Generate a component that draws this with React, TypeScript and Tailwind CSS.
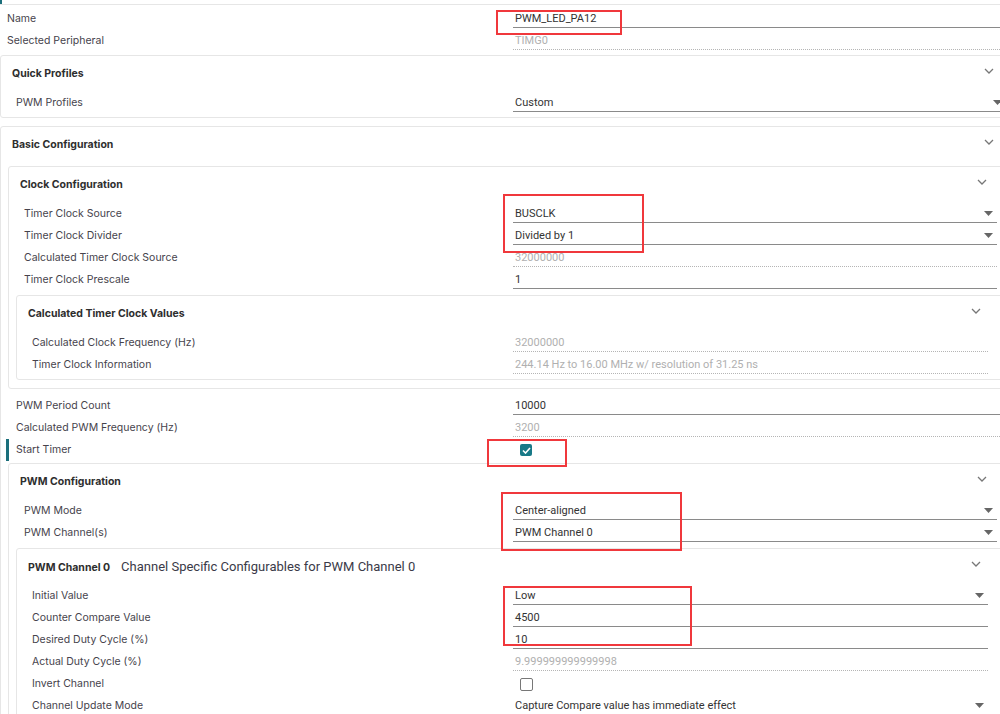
import React from 'react';

const LABEL_W = ['w-[497px]', 'w-[489px]', 'w-[481px]'];
const VALUE_W = ['w-[493px]', 'w-[484px]', 'w-[475px]'];
const HEAD_PR = ['pr-[18px]', 'pr-[17px]', 'pr-[15px]'];

function Chevron() {
  return (
    <svg width="10" height="6" viewBox="0 0 10 6" className="mb-[6px]">
      <polyline points="1,1 5,5 9,1" fill="none" stroke="#777" strokeWidth="1.3" />
    </svg>
  );
}

function Caret() {
  return (
    <svg width="9" height="5" viewBox="0 0 9 5" className="shrink-0">
      <polygon points="0,0 9,0 4.5,5" fill="#666" />
    </svg>
  );
}

type RowProps = {
  level: number;
  label: string;
  value?: string;
  kind?: 'input' | 'select' | 'readonly' | 'checked' | 'unchecked';
  marker?: boolean;
};

function Row({ level, label, value, kind = 'input', marker }: RowProps) {
  return (
    <div className="relative h-[22px] flex items-center pl-[8px]">
      {marker && <div className="absolute left-[-2px] top-0 h-[22px] w-[3px] bg-[#1b6f7b]" />}
      <div className={`${LABEL_W[level]} shrink-0 text-[10.5px] text-[#46434c] font-['Inter',sans-serif]`}>
        {label}
      </div>
      <Value level={level} value={value} kind={kind} />
    </div>
  );
}

function Value({ level, value, kind }: { level: number; value?: string; kind: RowProps['kind'] }) {
  const w = VALUE_W[level];
  if (kind === 'checked') {
    return (
      <div className={`${w} shrink-0 pl-[7px]`}>
        <div className="w-[12px] h-[12px] rounded-[2px] bg-[#187987] flex items-center justify-center">
          <svg width="9" height="7" viewBox="0 0 9 7">
            <polyline points="1,3.5 3.5,6 8,1" fill="none" stroke="#fff" strokeWidth="1.6" />
          </svg>
        </div>
      </div>
    );
  }
  if (kind === 'unchecked') {
    return (
      <div className={`${w} shrink-0 pl-[7px]`}>
        <div className="w-[13px] h-[13px] rounded-[2px] border-[1.5px] border-[#777]" />
      </div>
    );
  }
  return (
    <div
      className={`${w} shrink-0 h-[17px] flex items-center justify-between pl-[2px] pr-[4px] border-b font-['Roboto',sans-serif] text-[11px] leading-[16px] ${
        kind === 'readonly' ? 'border-dotted border-[#b5b5b5] text-[#b0b0b0]' : 'border-[#8a8a8a] text-[#333]'
      }`}
    >
      <span>{value}</span>
      {kind === 'select' && <Caret />}
    </div>
  );
}

function Panel({
  level,
  title,
  subtitle,
  className = '',
  children,
}: {
  level: number;
  title: string;
  subtitle?: string;
  className?: string;
  children: React.ReactNode;
}) {
  return (
    <div className={`border border-[#e6e6e6] rounded-[3px] px-[7px] pb-[3px] ${className}`}>
      <div className={`h-[36px] flex items-center justify-between pl-[4px] ${HEAD_PR[level]}`}>
        <div className="flex items-baseline gap-[11px]">
          <span className="text-[10.5px] font-bold text-[#2e2e2e] font-['Inter',sans-serif]">{title}</span>
          {subtitle && (
            <span className="text-[13px] text-[#3a3a48] font-['Roboto',sans-serif]">{subtitle}</span>
          )}
        </div>
        <Chevron />
      </div>
      {children}
    </div>
  );
}

function Mark({ className }: { className: string }) {
  return <div className={`absolute border-2 border-[#f0383c] pointer-events-none ${className}`} />;
}

export default function App() {
  return (
    <div className="relative w-[1000px] h-[714px] overflow-hidden bg-white">
      <div className="w-[1020px]">
        <div className="relative h-[5px] border-b border-[#e6e6e6]">
          <div className="absolute left-0 top-0 w-[2px] h-[4px] bg-[#1b6f7b]" />
        </div>

        <div className="pt-[3px]">
          <div className="h-[22px] flex items-center">
            <div className="w-[513px] shrink-0 pl-[7px] text-[10.5px] text-[#46434c] font-['Inter',sans-serif]">
              Name
            </div>
            <Value level={0} value="PWM_LED_PA12" kind="input" />
          </div>
          <div className="h-[22px] flex items-center">
            <div className="w-[513px] shrink-0 pl-[7px] text-[10.5px] text-[#46434c] font-['Inter',sans-serif]">
              Selected Peripheral
            </div>
            <Value level={0} value="TIMG0" kind="readonly" />
          </div>
        </div>

        <Panel level={0} title="Quick Profiles" className="mt-[3px]">
          <Row level={0} label="PWM Profiles" value="Custom" kind="select" />
        </Panel>

        <Panel level={0} title="Basic Configuration" className="mt-[8px]">
          <Panel level={1} title="Clock Configuration" className="mt-[3px] pb-[8px]">
            <Row level={1} label="Timer Clock Source" value="BUSCLK" kind="select" />
            <Row level={1} label="Timer Clock Divider" value="Divided by 1" kind="select" />
            <Row level={1} label="Calculated Timer Clock Source" value="32000000" kind="readonly" />
            <Row level={1} label="Timer Clock Prescale" value="1" />
            <Panel level={2} title="Calculated Timer Clock Values" className="mt-[4px]">
              <Row level={2} label="Calculated Clock Frequency (Hz)" value="32000000" kind="readonly" />
              <Row
                level={2}
                label="Timer Clock Information"
                value="244.14 Hz to 16.00 MHz w/ resolution of 31.25 ns"
                kind="readonly"
              />
            </Panel>
          </Panel>

          <div className="mt-[6px]">
            <Row level={0} label="PWM Period Count" value="10000" />
            <Row level={0} label="Calculated PWM Frequency (Hz)" value="3200" kind="readonly" />
            <Row level={0} label="Start Timer" kind="checked" marker />
          </div>

          <Panel level={1} title="PWM Configuration" className="mt-[2px]">
            <Row level={1} label="PWM Mode" value="Center-aligned" kind="select" />
            <Row level={1} label="PWM Channel(s)" value="PWM Channel 0" kind="select" />
            <Panel
              level={2}
              title="PWM Channel 0"
              subtitle="Channel Specific Configurables for PWM Channel 0"
              className="mt-[4px]"
            >
              <Row level={2} label="Initial Value" value="Low" kind="select" />
              <Row level={2} label="Counter Compare Value" value="4500" />
              <Row level={2} label="Desired Duty Cycle (%)" value="10" />
              <Row level={2} label="Actual Duty Cycle (%)" value="9.999999999999998" kind="readonly" />
              <Row level={2} label="Invert Channel" kind="unchecked" />
              <Row
                level={2}
                label="Channel Update Mode"
                value="Capture Compare value has immediate effect"
                kind="select"
              />
            </Panel>
          </Panel>
        </Panel>
      </div>

      {/* annotation boxes */}
      <Mark className="left-[496px] top-[10px] w-[126px] h-[25px]" />
      <Mark className="left-[503px] top-[194px] w-[141px] h-[59px]" />
      <Mark className="left-[487px] top-[439px] w-[80px] h-[28px]" />
      <Mark className="left-[501px] top-[492px] w-[181px] h-[59px]" />
      <Mark className="left-[503px] top-[586px] w-[189px] h-[60px]" />
    </div>
  );
}
